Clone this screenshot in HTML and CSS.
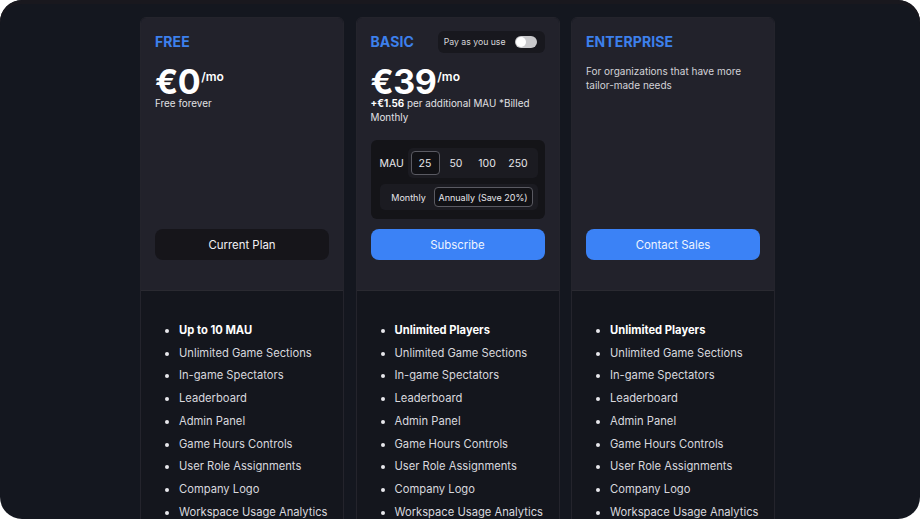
FILE: index.html
```html
<!DOCTYPE html>
<html lang="en">
<head>
<meta charset="utf-8">
<title>Pricing</title>
<link rel="stylesheet" href="styles.css">
</head>
<body>
<div class="frame">
  <div class="plans">
    <section class="card">
      <div class="card-top">
        <h2 class="plan-name">FREE</h2>
        <div class="price"><span class="amount">€0</span><span class="per">/mo</span></div>
        <p class="sub">Free forever</p>
        <button class="btn btn-dark">Current Plan</button>
      </div>
      <div class="card-bottom">
        <ul class="features">
          <li class="strong">Up to 10 MAU</li>
          <li>Unlimited Game Sections</li>
          <li>In-game Spectators</li>
          <li>Leaderboard</li>
          <li>Admin Panel</li>
          <li>Game Hours Controls</li>
          <li>User Role Assignments</li>
          <li>Company Logo</li>
          <li>Workspace Usage Analytics</li>
        </ul>
      </div>
    </section>

    <section class="card">
      <div class="card-top">
        <div class="head-row">
          <h2 class="plan-name">BASIC</h2>
          <div class="payg">
            <span>Pay as you use</span>
            <span class="switch"><span class="knob"></span></span>
          </div>
        </div>
        <div class="price"><span class="amount">€39</span><span class="per">/mo</span></div>
        <p class="sub"><b>+€1.56</b> per additional MAU *Billed Monthly</p>
        <div class="mau-box">
          <div class="mau-row">
            <span class="mau-label">MAU</span>
            <div class="seg seg-4">
              <span class="opt active">25</span>
              <span class="opt">50</span>
              <span class="opt">100</span>
              <span class="opt">250</span>
            </div>
          </div>
          <div class="seg seg-period">
            <span class="opt">Monthly</span>
            <span class="opt active">Annually (Save 20%)</span>
          </div>
        </div>
        <button class="btn btn-blue">Subscribe</button>
      </div>
      <div class="card-bottom">
        <ul class="features">
          <li class="strong">Unlimited Players</li>
          <li>Unlimited Game Sections</li>
          <li>In-game Spectators</li>
          <li>Leaderboard</li>
          <li>Admin Panel</li>
          <li>Game Hours Controls</li>
          <li>User Role Assignments</li>
          <li>Company Logo</li>
          <li>Workspace Usage Analytics</li>
        </ul>
      </div>
    </section>

    <section class="card">
      <div class="card-top">
        <h2 class="plan-name">ENTERPRISE</h2>
        <p class="desc">For organizations that have more tailor-made needs</p>
        <button class="btn btn-blue">Contact Sales</button>
      </div>
      <div class="card-bottom">
        <ul class="features">
          <li class="strong">Unlimited Players</li>
          <li>Unlimited Game Sections</li>
          <li>In-game Spectators</li>
          <li>Leaderboard</li>
          <li>Admin Panel</li>
          <li>Game Hours Controls</li>
          <li>User Role Assignments</li>
          <li>Company Logo</li>
          <li>Workspace Usage Analytics</li>
        </ul>
      </div>
    </section>
  </div>
</div>
</body>
</html>
```

FILE: styles.css
```css
* { box-sizing: border-box; }
html, body {
  margin: 0;
  padding: 0;
  background: #ffffff;
}
body {
  font-family: Inter, "Noto Sans", "Liberation Sans", sans-serif;
  color: #e4e4e8;
}
.frame {
  width: 920px;
  height: 519px;
  border-radius: 22px;
  background: #14171f;
  box-shadow: inset 0 4px 0 #19181e;
  overflow: hidden;
}
.plans {
  display: flex;
  justify-content: center;
  gap: 11.5px;
  padding-top: 17px;
  padding-right: 5px;
}
.card {
  width: 204px;
  border: 1px solid #24242c;
  border-radius: 6px 6px 0 0;
  overflow: hidden;
  display: flex;
  flex-direction: column;
}
.card-top {
  height: 272px;
  background: #22222b;
  padding: 14px 14px 30px 14px;
  display: flex;
  flex-direction: column;
}
.plan-name {
  margin: 0;
  font-size: 14px;
  line-height: 20px;
  font-weight: 700;
  color: #3d80ec;
  letter-spacing: 0.1px;
}
.head-row {
  display: flex;
  justify-content: space-between;
  align-items: center;
  height: 20px;
}
.payg {
  display: flex;
  align-items: center;
  gap: 9px;
  height: 22px;
  padding: 0 8px 0 6px;
  background: #18181e;
  border-radius: 6px;
  font-size: 8.7px;
  color: #d8d8dc;
}
.switch {
  width: 22px;
  height: 12px;
  border-radius: 6px;
  background: #c9c9cc;
  position: relative;
}
.knob {
  position: absolute;
  left: 1px;
  top: 1px;
  width: 10px;
  height: 10px;
  border-radius: 50%;
  background: #ffffff;
}
.price {
  margin-top: 14px;
  display: flex;
  align-items: flex-start;
  color: #ffffff;
}
.amount {
  font-size: 34px;
  line-height: 32px;
  font-weight: 700;
  letter-spacing: -0.5px;
}
.per {
  font-size: 12px;
  font-weight: 600;
  margin-top: 3px;
  margin-left: 1px;
}
.sub {
  margin: -2px 0 0;
  font-size: 9.9px;
  line-height: 14px;
  color: #e0e0e4;
}
.sub b { font-weight: 700; color: #ffffff; }
.desc {
  margin: 12px 0 0;
  font-size: 10px;
  line-height: 14px;
  color: #d2d2d8;
}
.mau-box {
  margin-top: 16px;
  background: #141418;
  border-radius: 6px;
  padding: 8px 7px 9px 9px;
  display: flex;
  flex-direction: column;
  gap: 6px;
}
.mau-row {
  display: flex;
  align-items: center;
  justify-content: space-between;
}
.mau-label {
  font-size: 10.5px;
  color: #e8e8ec;
}
.seg {
  background: #1b1b21;
  border-radius: 5px;
  padding: 3px;
  display: grid;
}
.seg-4 {
  width: 130px;
  height: 30px;
  grid-template-columns: repeat(4, 1fr);
}
.seg-period {
  height: 26px;
  padding: 3px 5px 3px 4px;
  grid-template-columns: 1fr 99px;
}
.opt {
  display: flex;
  align-items: center;
  justify-content: center;
  border: 1px solid transparent;
  border-radius: 4px;
  font-size: 10.5px;
  color: #e6e6ea;
}
.seg-4 .opt { margin-right: 2px; }
.seg-period .opt { font-size: 9px; }
.opt.active {
  background: #111115;
  border-color: #5a5a62;
}
.btn {
  margin-top: auto;
  height: 31px;
  width: 100%;
  border: 0;
  border-radius: 8px;
  font-family: inherit;
  font-size: 11.4px;
  color: #f2f2f5;
}
.btn-dark { background: #16151a; }
.btn-blue { background: #3b82f6; color: #eef4ff; }
.card-bottom {
  flex: 1;
  background: #14161d;
  border-top: 1px solid #2a2a31;
  padding-top: 28px;
}
.features {
  list-style: none;
  margin: 0;
  padding: 0 0 0 38px;
}
.features li {
  position: relative;
  font-size: 11.2px;
  line-height: 22.7px;
  color: #d8d8dd;
  white-space: nowrap;
}
.features li::before {
  content: "";
  position: absolute;
  left: -14px;
  top: 10px;
  width: 4px;
  height: 4px;
  border-radius: 50%;
  background: #e8e8ec;
}
.features li.strong {
  font-weight: 700;
  color: #ffffff;
}
```
